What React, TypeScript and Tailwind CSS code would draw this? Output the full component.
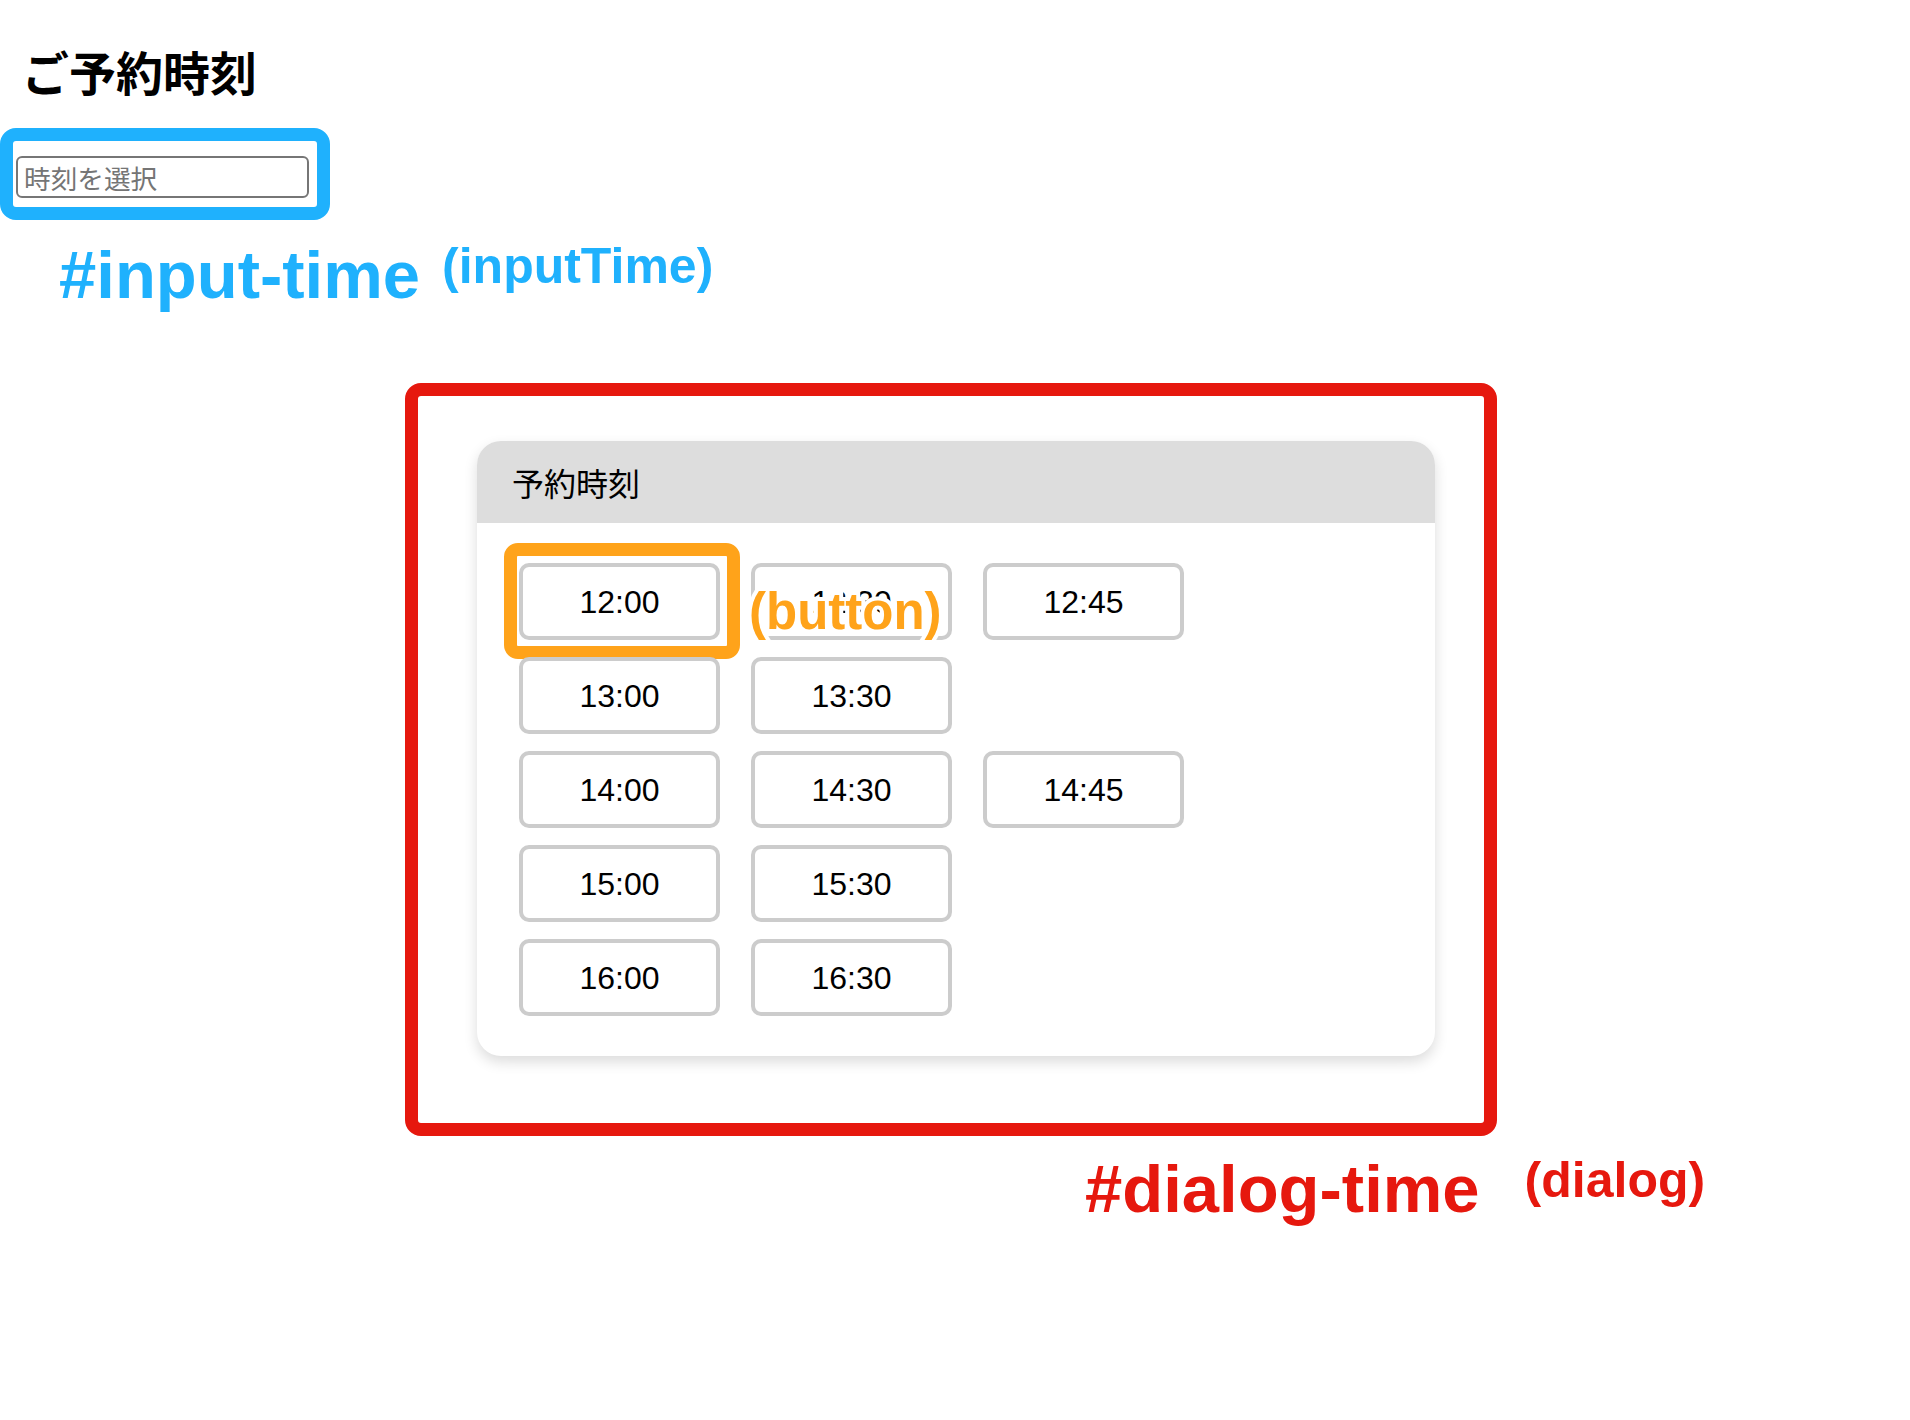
const rows: string[][] = [
  ['12:00', '12:30', '12:45'],
  ['13:00', '13:30'],
  ['14:00', '14:30', '14:45'],
  ['15:00', '15:30'],
  ['16:00', '16:30'],
]

const latin = 'font-["Liberation_Sans",Arial,sans-serif]'
const jp = 'font-["Noto_Sans_CJK_JP","Noto_Sans",sans-serif]'

function TimeButton({ label, highlight, tagged }: { label: string; highlight?: boolean; tagged?: boolean }) {
  return (
    <div className="relative h-[77px] w-[201px]">
      <button
        className={`flex h-full w-full items-center justify-center rounded-[10px] border-4 border-[#cccccc] bg-white text-[32px] leading-none text-black ${latin}`}
      >
        {label}
      </button>
      {highlight && (
        <div className="pointer-events-none absolute -top-[20px] -left-[15px] h-[116px] w-[236px] rounded-[14px] border-[13px] border-[#ffa31a]" />
      )}
      {tagged && (
        <div className={`pointer-events-none absolute top-[23px] -left-[2px] text-[51px] font-bold leading-none ${latin}`}>
          <span className="absolute top-0 left-0 whitespace-nowrap text-white [-webkit-text-stroke:8px_white]">(button)</span>
          <span className="relative whitespace-nowrap text-[#ffa31a]">(button)</span>
        </div>
      )}
    </div>
  )
}

export default function App() {
  return (
    <div className="min-h-[1420px] w-full bg-white">
      <h1 className={`pt-[47px] pl-[22px] text-[47px] font-bold leading-[48px] text-black ${jp}`}>ご予約時刻</h1>

      {/* #input-time */}
      <div className="mt-[33px] w-[330px] rounded-[16px] border-[13px] border-[#1fb1fd] pt-[15px] pr-[8px] pb-[9px] pl-[3px]">
        <input
          placeholder="時刻を選択"
          className={`h-[42px] w-[293px] rounded-[6px] border-2 border-[#767676] px-[6px] text-[26.67px] text-black outline-none placeholder:text-[#757575] ${jp}`}
        />
      </div>
      <div className={`mt-[21px] ml-[59px] flex items-start font-bold leading-none text-[#1fb1fd] ${latin}`}>
        <span className="text-[67px]">#input-time</span>
        <span className="ml-[22px] text-[50px]">(inputTime)</span>
      </div>

      {/* #dialog-time */}
      <div className="mt-[75px] ml-[405px] w-fit rounded-[16px] border-[13px] border-[#e6180e] pt-[45px] pr-[49px] pb-[67px] pl-[59px]">
        <div className="w-[958px] overflow-hidden rounded-[24px] bg-white shadow-[0_6px_14px_rgba(0,0,0,0.14)]">
          <div className={`flex h-[82px] items-center bg-[#dddddd] pl-[35px] text-[32px] text-black ${jp}`}>予約時刻</div>
          <div className="flex flex-col gap-[17px] px-[42px] pt-[40px] pb-[40px]">
            {rows.map((row, i) => (
              <div key={i} className="flex gap-[31px]">
                {row.map(t => (
                  <TimeButton key={t} label={t} highlight={t === '12:00'} tagged={t === '12:30'} />
                ))}
              </div>
            ))}
          </div>
        </div>
      </div>
      <div className={`mt-[19px] ml-[1085px] flex items-start font-bold leading-none text-[#e6180e] ${latin}`}>
        <span className="text-[67px]">#dialog-time</span>
        <span className="ml-[45px] text-[50px]">(dialog)</span>
      </div>
    </div>
  )
}
